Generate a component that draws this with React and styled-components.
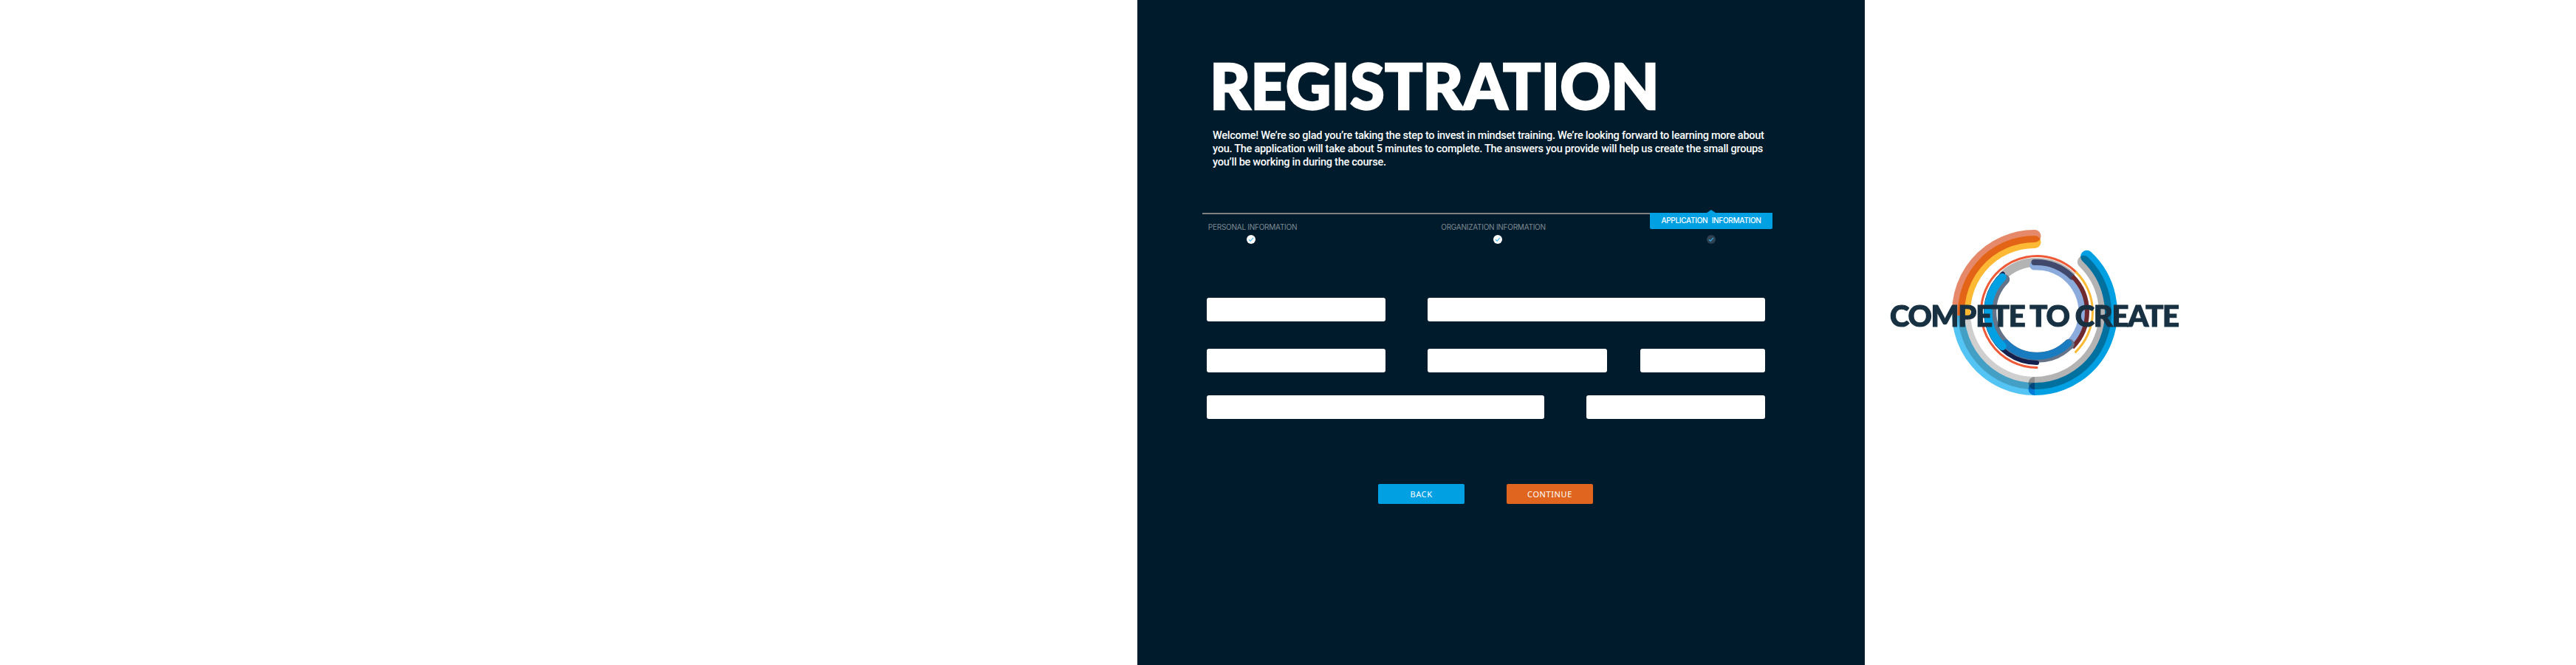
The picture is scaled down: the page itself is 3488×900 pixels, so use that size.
import React from 'react';
import styled, { createGlobalStyle } from 'styled-components';

const GlobalStyle = createGlobalStyle`
  html, body {
    margin: 0;
    padding: 0;
    background: #ffffff;
  }
`;

const Page = styled.div`
  display: flex;
  align-items: flex-start;
  width: 3488px;
  height: 900px;
  padding-left: 1540px;
  box-sizing: border-box;
  overflow: hidden;
`;

const Panel = styled.main`
  width: 985px;
  height: 900px;
  flex: none;
  padding-top: 75px;
  box-sizing: border-box;
  background: #001b2b;
`;

const Title = styled.h1`
  margin: 0 0 0 98px;
  font-family: 'Lato', sans-serif;
  font-weight: 900;
  font-size: 85px;
  line-height: 80px;
  letter-spacing: 0;
  -webkit-text-stroke: 2.4px #ffffff;
  color: #ffffff;
`;

const Intro = styled.p`
  width: 756px;
  margin: 20px 0 0 102px;
  font-family: 'Roboto', sans-serif;
  font-weight: 500;
  font-size: 14.5px;
  line-height: 18px;
  letter-spacing: -0.27px;
  color: #ffffff;
`;

const Stepper = styled.ol`
  position: relative;
  display: flex;
  width: 772px;
  margin: 59px 0 0 88px;
  padding: 0;
  list-style: none;

  &::before {
    content: '';
    position: absolute;
    top: 0;
    left: 0;
    width: 606px;
    height: 2px;
    background: #808080;
  }
`;

const Step = styled.li`
  display: flex;
  flex-direction: column;
  align-items: center;
  flex: none;
  width: ${p => p.$width}px;
  margin-left: ${p => p.$offset || 0}px;
`;

const LabelSlot = styled.div`
  display: flex;
  justify-content: center;
  height: 30px;
`;

const Label = styled.span`
  padding: 13px ${p => p.$pull || 0}px 0 ${p => p.$push || 0}px;
  font-family: 'Inter', sans-serif;
  font-size: 10px;
  line-height: 12px;
  letter-spacing: -0.25px;
  white-space: nowrap;
  color: #7f8a93;
`;

const Badge = styled.span`
  position: relative;
  display: block;
  width: 166px;
  height: 22px;
  border-radius: 0 0 2px 2px;
  font-family: 'Inter', sans-serif;
  font-weight: 500;
  font-size: 10px;
  line-height: 21px;
  letter-spacing: -0.3px;
  word-spacing: 3px;
  text-align: center;
  white-space: nowrap;
  color: #ffffff;
  background: #00a0e3;

  &::before {
    content: '';
    position: absolute;
    top: -4px;
    left: 77px;
    border-left: 6px solid transparent;
    border-right: 6px solid transparent;
    border-bottom: 4px solid #00a0e3;
  }
`;

const Dot = styled.span`
  display: flex;
  align-items: center;
  justify-content: center;
  width: 12px;
  height: 12px;
  border-radius: 50%;
  background: ${p => (p.$active ? '#2e4252' : '#ffffff')};
`;

const Form = styled.form`
  display: flex;
  flex-direction: column;
  width: 756px;
  margin: 73px 0 0 94px;
`;

const Row = styled.div`
  display: flex;
  gap: 57px;
  margin-top: ${p => p.$top || 0}px;
`;

const Field = styled.input`
  flex: none;
  width: ${p => p.$width}px;
  height: 32px;
  margin-left: ${p => p.$pull || 0}px;
  padding: 0;
  border: 0;
  border-radius: 3px;
  background: #ffffff;
`;

const Actions = styled.div`
  display: flex;
  justify-content: center;
  gap: 57px;
  margin-top: 88px;
  padding-right: 1px;
`;

const Button = styled.button`
  width: 117px;
  height: 27px;
  padding: 0;
  border: 0;
  border-radius: 2px;
  font-family: 'Noto Sans', sans-serif;
  font-size: 11px;
  letter-spacing: 0.6px;
  color: #ffffff;
  background: ${p => (p.$primary ? '#e0651e' : '#00a0e3')};
`;

const LogoWrap = styled.aside`
  flex: none;
  width: 410px;
  height: 245px;
  margin: 300px 0 0 25px;
`;

const LogoSvg = styled.svg`
  display: block;
  isolation: isolate;
`;

const Arc = styled.path`
  fill: none;
  mix-blend-mode: ${p => (p.$flat ? 'normal' : 'multiply')};
`;

const LogoText = styled.text`
  font-family: 'Lato', sans-serif;
  font-weight: 900;
  font-size: 40px;
  stroke: #183142;
  stroke-width: 1.2px;
  fill: #183142;
`;

// clockwise arc, angles in degrees from 12 o'clock
const arc = (cx, cy, r, from, to) => {
  const pt = a => {
    const t = ((a - 90) * Math.PI) / 180;
    return `${(cx + r * Math.cos(t)).toFixed(2)} ${(cy + r * Math.sin(t)).toFixed(2)}`;
  };
  const large = to - from > 180 ? 1 : 0;
  return `M${pt(from)} A${r} ${r} 0 ${large} 1 ${pt(to)}`;
};

const OX = 2755;
const OY = 423;
const IX = 2758;
const IY = 422;

const Logo = () => (
  <LogoWrap>
    <LogoSvg width="410" height="245" viewBox="2550 300 410 245">
      <defs>
        <clipPath id="upper-half">
          <rect x="2550" y="300" width="205" height="127" />
          <rect x="2755" y="300" width="30" height="60" />
        </clipPath>
        <clipPath id="lower-half">
          <rect x="2550" y="427" width="205" height="118" />
        </clipPath>
      </defs>

      <g clipPath="url(#upper-half)">
        <Arc d={arc(OX, OY, 103.5, -100, 0)} stroke="#e5896a" strokeWidth="17" strokeLinecap="round" />
        <Arc d={arc(OX, OY, 95.5, -100, 0)} stroke="#fdb933" strokeWidth="17" strokeLinecap="round" />
      </g>
      <g clipPath="url(#lower-half)">
        <Arc d={arc(OX, OY, 103.5, 180, 280)} stroke="#53c4f3" strokeWidth="17" />
        <Arc d={arc(OX, OY, 95.5, 180, 280)} stroke="#cfcfcf" strokeWidth="17" />
      </g>
      <Arc d={arc(OX, OY, 103.5, 43, 180)} stroke="#00a0e3" strokeWidth="17" strokeLinecap="round" />
      <Arc d={arc(OX, OY, 95.5, 44, 180)} stroke="#b3b3b3" strokeWidth="17" strokeLinecap="round" />

      <Arc $flat d={arc(IX, IY, 75.5, 180, 405)} stroke="#ee5a38" strokeWidth="3" strokeLinecap="round" />
      <Arc $flat d={arc(IX, IY, 75.5, 45, 136)} stroke="#fdb933" strokeWidth="3" strokeLinecap="round" />
      <Arc $flat d={arc(IX, IY, 67, -45, 45)} stroke="#b3b3b3" strokeWidth="12" />
      <Arc $flat d={arc(IX, IY, 63, -3, 135)} stroke="#8cabdd" strokeWidth="13" strokeLinecap="round" />
      <Arc $flat d={arc(IX, IY, 67, -3, 45)} stroke="#40486c" strokeWidth="8" strokeLinecap="round" />
      <Arc $flat d={arc(IX, IY, 68, 45, 135)} stroke="#6e2a2e" strokeWidth="6" />
      <Arc $flat d={arc(IX, IY, 62, 135, 315)} stroke="#657388" strokeWidth="14" strokeLinecap="round" />
      <Arc $flat d={arc(IX, IY, 69, 180, 318)} stroke="#14204e" strokeWidth="6" strokeLinecap="round" />
      <Arc $flat d={arc(IX, IY, 60, 135, 225)} stroke="#1a7cc0" strokeWidth="10" strokeLinecap="round" />
      <Arc $flat d={arc(IX, IY, 66, 225, 315)} stroke="#00a0e3" strokeWidth="11" strokeLinecap="round" />

      <LogoText x="2559" y="441.5" textLength="392" lengthAdjust="spacing">
        COMPETE TO CREATE
      </LogoText>
    </LogoSvg>
  </LogoWrap>
);

const Check = ({ color }) => (
  <svg width="8" height="8" viewBox="0 0 8 8">
    <polyline points="1,4.2 3.1,6.2 7,1.8" fill="none" stroke={color} strokeWidth="1.2" />
  </svg>
);

export default function App() {
  return (
    <>
      <GlobalStyle />
      <Page>
        <Panel>
          <Title>REGISTRATION</Title>
          <Intro>
            Welcome! We’re so glad you’re taking the step to invest in mindset training. We’re looking forward to
            learning more about you. The application will take about 5 minutes to complete. The answers you provide
            will help us create the small groups you’ll be working in during the course.
          </Intro>

          <Stepper>
            <Step $width={132}>
              <LabelSlot>
                <Label $push={4}>PERSONAL INFORMATION</Label>
              </LabelSlot>
              <Dot>
                <Check color="#4db8ee" />
              </Dot>
            </Step>
            <Step $width={132} $offset={202}>
              <LabelSlot>
                <Label $pull={12}>ORGANIZATION INFORMATION</Label>
              </LabelSlot>
              <Dot>
                <Check color="#4db8ee" />
              </Dot>
            </Step>
            <Step $width={166} $offset={140}>
              <LabelSlot>
                <Badge>APPLICATION INFORMATION</Badge>
              </LabelSlot>
              <Dot $active>
                <Check color="#35a9e6" />
              </Dot>
            </Step>
          </Stepper>

          <Form>
            <Row>
              <Field $width={242} />
              <Field $width={457} />
            </Row>
            <Row $top={37}>
              <Field $width={242} />
              <Field $width={243} />
              <Field $width={169} $pull={-12} />
            </Row>
            <Row $top={31}>
              <Field $width={457} />
              <Field $width={242} />
            </Row>
            <Actions>
              <Button type="button">BACK</Button>
              <Button type="button" $primary>
                CONTINUE
              </Button>
            </Actions>
          </Form>
        </Panel>
        <Logo />
      </Page>
    </>
  );
}
